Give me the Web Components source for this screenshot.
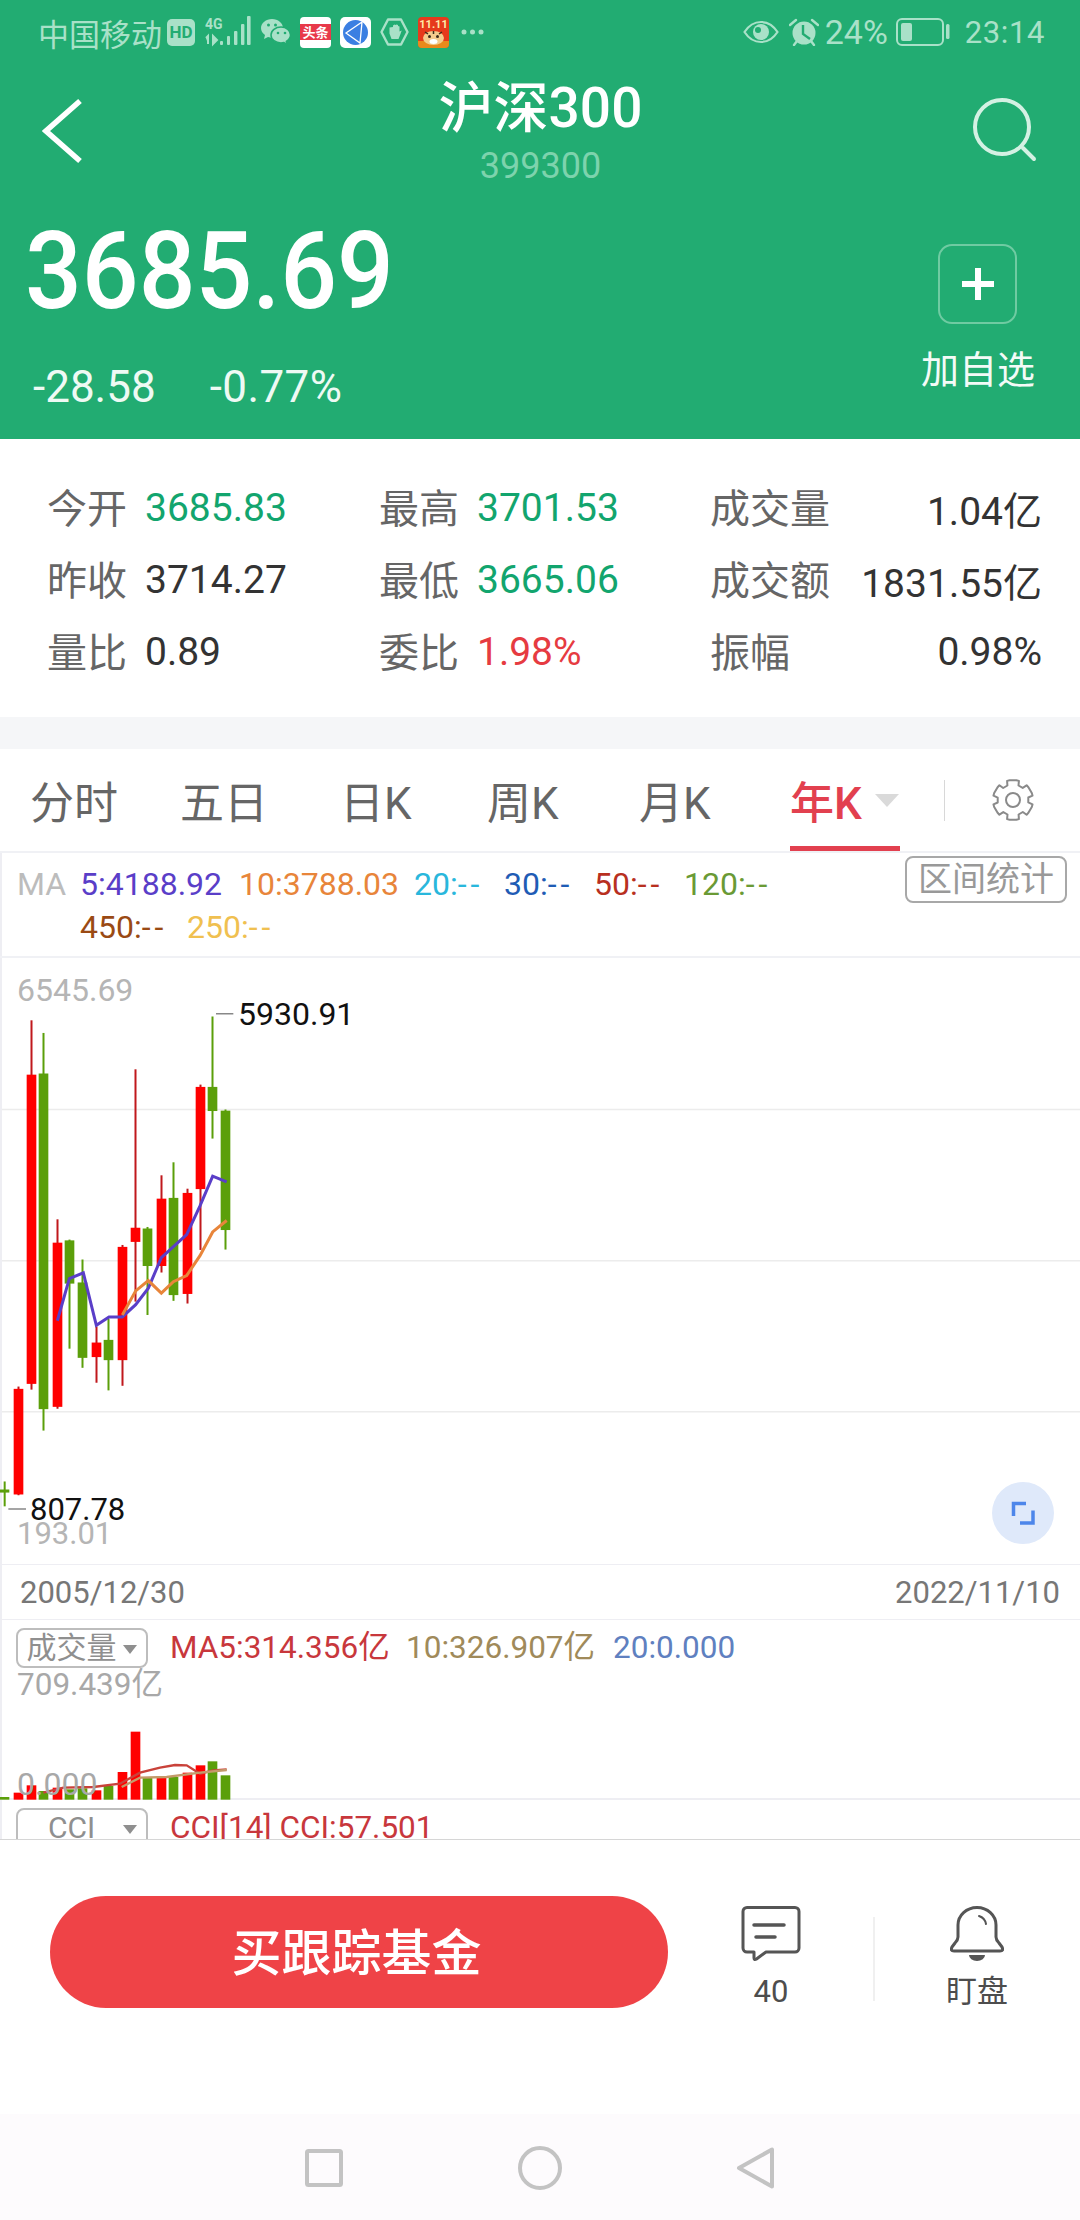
<!DOCTYPE html>
<html lang="zh">
<head>
<meta charset="utf-8">
<title>沪深300</title>
<style>
  html, body { margin: 0; background: #fff; }
  body { width: 1080px; height: 2220px; overflow: hidden; font-family: Roboto, "Noto Sans CJK SC", sans-serif; }
</style>
</head>
<body>
<quote-header></quote-header>
<stat-grid>
  <stat-cell label="今开" class="down">3685.83</stat-cell>
  <stat-cell label="最高" class="down">3701.53</stat-cell>
  <stat-cell label="成交量" class="end">1.04亿</stat-cell>
  <stat-cell label="昨收">3714.27</stat-cell>
  <stat-cell label="最低" class="down">3665.06</stat-cell>
  <stat-cell label="成交额" class="end">1831.55亿</stat-cell>
  <stat-cell label="量比">0.89</stat-cell>
  <stat-cell label="委比" class="up">1.98%</stat-cell>
  <stat-cell label="振幅" class="end">0.98%</stat-cell>
</stat-grid>
<period-tabs></period-tabs>
<ma-legend></ma-legend>
<kline-chart></kline-chart>
<date-row></date-row>
<volume-panel></volume-panel>
<cci-panel></cci-panel>
<action-bar></action-bar>
<nav-bar></nav-bar>

<script>
const ICON = '#a9e1c8';

class StatusBar extends HTMLElement {
  connectedCallback() {
    this.attachShadow({ mode: 'open' });
    this.shadowRoot.innerHTML = `
      <style>
        :host { display: flex; align-items: center; justify-content: space-between; height: 66px; padding: 0 35px 2px 38px; box-sizing: border-box; color: ${ICON}; font-size: 31px; }
        .side { display: flex; align-items: center; }
        svg { display: block; flex: none; }
        .hd { width: 28px; height: 27px; margin-left: 5px; border-radius: 5px; background: ${ICON}; color: #22ac72; font: 700 17px/27px Roboto, sans-serif; text-align: center; }
        .news { width: 31px; height: 31px; margin-left: 9px; border-radius: 4px; background: #fff; display: flex; align-items: center; overflow: hidden; }
        .news span { display: block; width: 100%; height: 16px; background: #e8394a; color: #fff; font: 700 13px/16px "Noto Sans CJK SC", sans-serif; text-align: center; }
        .pct { margin-left: 6px; font-size: 34px; }
        .time { margin-left: 15px; font-size: 31px; letter-spacing: .6px; }
      </style>
      <div class="side">
        <span>中国移动</span>
        <span class="hd">HD</span>
        <svg style="margin-left:10px" width="46" height="32" viewBox="0 0 46 32">
          <text x="0" y="13" font-family="Roboto" font-weight="700" font-size="14" fill="${ICON}">4G</text>
          <path d="M3 28V20l-2 2M8 20v8l4-4z" fill="${ICON}" stroke="${ICON}" stroke-width="2"/>
          <rect x="15" y="25" width="3" height="4" rx="1" fill="${ICON}"/>
          <rect x="22" y="20" width="3" height="9" rx="1" fill="${ICON}"/>
          <rect x="29" y="15" width="3.4" height="14" rx="1" fill="${ICON}"/>
          <rect x="36" y="8" width="3.4" height="21" rx="1" fill="${ICON}"/>
          <rect x="42" y="0" width="3.6" height="29" rx="1" fill="${ICON}"/>
        </svg>
        <svg style="margin-left:10px" width="30" height="28" viewBox="0 0 30 28">
          <path d="M11 1C5 1 0 5 0 10c0 3 1.500 5 4 7l-1 4 4-2c1.500.5 3 .7 4 .7C17 20 22 15 22 10 22 5 17 1 11 1z" fill="${ICON}"/>
          <path d="M20 9c-5.500 0-10 3.500-10 8s4.500 8 10 8c1 0 2-.2 3-.5l3 2-.7-3.200c2.700-1.600 4.200-3.800 4.200-6.300 0-4.500-4-8-9.500-8z" fill="${ICON}" stroke="#22ac72" stroke-width="1.500"/>
          <circle cx="7.500" cy="7" r="1.500" fill="#22ac72"/><circle cx="14.500" cy="7" r="1.500" fill="#22ac72"/>
          <circle cx="17" cy="15" r="1.300" fill="#22ac72"/><circle cx="24" cy="15" r="1.300" fill="#22ac72"/>
        </svg>
        <div class="news"><span>头条</span></div>
        <svg style="margin-left:9px" width="31" height="31" viewBox="0 0 31 31">
          <rect width="31" height="31" rx="5" fill="#fff"/>
          <circle cx="15.500" cy="15.500" r="12.500" fill="#3b7fe2"/>
          <path d="M22 5L6 16l14 10zM22 5l-2 21" fill="none" stroke="#fff" stroke-width="1.300"/>
        </svg>
        <svg style="margin-left:9px" width="29" height="28" viewBox="0 0 29 28">
          <path d="M8 1.500h13L27.500 14 21 26.500H8L1.500 14z" fill="none" stroke="${ICON}" stroke-width="2.400" stroke-linejoin="round"/>
          <path d="M9.500 9.500v6l2 5.500h7l2-5 1.200-3.500-2.200 1V8.500l-1.500-.5V7l-1.500-.5-1 .5-1-.5-1.500 1v1.500z" fill="${ICON}"/>
        </svg>
        <svg style="margin-left:9px" width="31" height="31" viewBox="0 0 31 31">
          <rect width="31" height="31" rx="4" fill="#e63a1c"/>
          <path d="M0 24h31v3a4 4 0 0 1-4 4H4a4 4 0 0 1-4-4z" fill="#e98a1c"/>
          <text x="15.500" y="11" text-anchor="middle" font-family="Roboto" font-weight="700" font-size="11" fill="#ffe9a8">11.11</text>
          <ellipse cx="15.500" cy="21" rx="10.500" ry="7" fill="#f4cc8c"/>
          <circle cx="11.500" cy="19.500" r="1.500" fill="#3a2a1a"/><circle cx="19.500" cy="19.500" r="1.500" fill="#3a2a1a"/>
          <path d="M7 15l3 2M24 15l-3 2M15.500 14v3" stroke="#3a2a1a" stroke-width="1.500"/>
          <ellipse cx="15.500" cy="24.500" rx="4" ry="2.500" fill="#fff"/>
        </svg>
        <svg style="margin-left:12px" width="23" height="6" viewBox="0 0 23 6">
          <circle cx="3" cy="3" r="2.500" fill="${ICON}"/><circle cx="11.500" cy="3" r="2.500" fill="${ICON}"/><circle cx="20" cy="3" r="2.500" fill="${ICON}"/>
        </svg>
      </div>
      <div class="side">
        <svg width="36" height="24" viewBox="0 0 36 24">
          <path d="M1.500 12C6 5 12 2 18 2s12 3 16.500 10C30 19 24 22 18 22S6 19 1.500 12z" fill="none" stroke="${ICON}" stroke-width="2.200"/>
          <circle cx="18" cy="12" r="8" fill="${ICON}"/>
          <circle cx="15" cy="10" r="3" fill="#22ac72"/>
        </svg>
        <svg style="margin-left:10px" width="30" height="28" viewBox="0 0 30 28">
          <circle cx="15" cy="15" r="11.500" fill="${ICON}"/>
          <path d="M14 7v9l7 5" fill="none" stroke="#22ac72" stroke-width="2.400"/>
          <path d="M1 7l6-5M29 7l-6-5M5 27l3-4M25 27l-3-4" stroke="${ICON}" stroke-width="2.400" stroke-linecap="round"/>
        </svg>
        <span class="pct">24%</span>
        <svg style="margin-left:8px" width="54" height="28" viewBox="0 0 54 28">
          <rect x="1" y="1" width="46" height="26" rx="5" fill="none" stroke="${ICON}" stroke-width="2"/>
          <rect x="5" y="5" width="11" height="18" rx="2" fill="${ICON}"/>
          <rect x="50" y="6" width="3.500" height="15" rx="1.500" fill="${ICON}"/>
        </svg>
        <span class="time">23:14</span>
      </div>`;
  }
}
customElements.define('status-bar', StatusBar);

class QuoteHeader extends HTMLElement {
  connectedCallback() {
    this.attachShadow({ mode: 'open' });
    this.shadowRoot.innerHTML = `
      <style>
        :host { display: block; background: #22ac72; color: #fff; height: 439px; }
        .nav { display: grid; grid-template-columns: 1fr auto 1fr; align-items: center; height: 130px; padding: 0 41px 0 42px; }
        .nav svg:last-child { justify-self: end; }
        .title { display: flex; flex-direction: column; align-items: center; }
        .name { font-size: 55px; line-height: 64px; font-weight: 500; }
        .code { margin-top: 6px; font-size: 36px; line-height: 40px; color: #7dd3ad; }
        .quote { display: flex; justify-content: space-between; padding: 16px 45px 0 25px; }
        .price { font-size: 107px; line-height: 120px; font-weight: 500; transform: scaleX(.935); transform-origin: left; }
        .change { display: flex; gap: 54px; margin: 30px 0 0 8px; font-size: 44px; line-height: 50px; color: #eefaf4; }
        .change span:last-child { letter-spacing: .4px; }
        .add { display: flex; flex-direction: column; align-items: center; margin-top: 32px; }
        .plus { width: 79px; height: 80px; box-sizing: border-box; border: 2px solid #6fcba2; border-radius: 14px; display: flex; align-items: center; justify-content: center; }
        .add span { margin-top: 23px; font-size: 38px; line-height: 46px; color: #f3fbf7; white-space: nowrap; }
      </style>
      <status-bar></status-bar>
      <div class="nav">
        <svg width="42" height="66" viewBox="0 0 42 66">
          <path d="M38 3L4 33l34 30" fill="none" stroke="#fff" stroke-width="5.500"/>
        </svg>
        <div class="title">
          <div class="name">沪深300</div>
          <div class="code">399300</div>
        </div>
        <svg width="66" height="66" viewBox="0 0 66 66">
          <circle cx="29" cy="29" r="27" fill="none" stroke="#d4f1e3" stroke-width="4"/>
          <path d="M50 50l11 11" stroke="#d4f1e3" stroke-width="4" stroke-linecap="round"/>
        </svg>
      </div>
      <div class="quote">
        <div>
          <div class="price">3685.69</div>
          <div class="change"><span>-28.58</span><span>-0.77%</span></div>
        </div>
        <div class="add">
          <div class="plus"><svg width="32" height="32" viewBox="0 0 32 32"><path d="M16 0v32M0 16h32" stroke="#fff" stroke-width="6"/></svg></div>
          <span>加自选</span>
        </div>
      </div>`;
  }
}
customElements.define('quote-header', QuoteHeader);

class StatGrid extends HTMLElement {
  connectedCallback() {
    this.attachShadow({ mode: 'open' });
    this.shadowRoot.innerHTML = `
      <style>
        :host { display: grid; grid-template-columns: 332px 331px 1fr; grid-auto-rows: 72px; padding: 33px 38px 29px 47px; background: #fff; border-bottom: 32px solid #f5f6f8; }
      </style>
      <slot></slot>`;
  }
}
customElements.define('stat-grid', StatGrid);

class StatCell extends HTMLElement {
  connectedCallback() {
    this.attachShadow({ mode: 'open' });
    this.shadowRoot.innerHTML = `
      <style>
        :host { display: flex; align-items: center; color: #333; }
        :host(.down) { color: #12a56e; }
        :host(.up) { color: #e63b41; }
        :host(.end) { justify-content: space-between; }
        .label { width: 98px; margin-top: -5px; color: #666; font-size: 40px; white-space: nowrap; }
        .value { font-size: 39px; white-space: nowrap; }
      </style>
      <span class="label">${this.getAttribute('label')}</span>
      <span class="value"><slot></slot></span>`;
  }
}
customElements.define('stat-cell', StatCell);

class PeriodTabs extends HTMLElement {
  connectedCallback() {
    const gear = [];
    for (let i = 0; i < 6; i++) {
      const a = -Math.PI / 2 + i * Math.PI / 3;
      [[-.3, 20], [-.17, 20], [.17, 20], [.3, 20], [.36, 15.500], [.68, 15.500]].forEach(([d, r]) => {
        gear.push((21 + r * Math.cos(a + d)).toFixed(1) + ' ' + (21 + r * Math.sin(a + d)).toFixed(1));
      });
    }
    this.attachShadow({ mode: 'open' });
    this.shadowRoot.innerHTML = `
      <style>
        :host { display: grid; grid-template-columns: 150px 160px 147px 152px 150px 155px 48px 42px; align-items: center; height: 102px; padding-left: 30px; background: #fff; border-bottom: 2px solid #f0f1f5; font-size: 44px; color: #666; }
        .on { position: relative; display: flex; align-items: center; height: 100%; color: #e2404f; font-weight: 500; margin-left: 1px; }
        .on::after { content: ""; position: absolute; left: 0; width: 110px; bottom: 0; height: 5px; background: #e2404f; }
        .on i { margin: 0 0 0 13px; width: 0; height: 0; border: 12px solid transparent; border-top: 13px solid #dadada; border-bottom: 0; }
        .rule { width: 1px; height: 41px; background: #d8d8d8; }
        svg { display: block; }
      </style>
      <span>分时</span><span>五日</span><span>日K</span><span>周K</span><span>月K</span>
      <span class="on">年K<i></i></span>
      <span class="rule"></span>
      <svg width="42" height="42" viewBox="0 0 42 42">
        <path d="M${gear.join('L')}z" fill="none" stroke="#8a8a8a" stroke-width="2" stroke-linejoin="round"/>
        <circle cx="21" cy="21" r="7" fill="none" stroke="#8a8a8a" stroke-width="2"/>
      </svg>`;
  }
}
customElements.define('period-tabs', PeriodTabs);

class MaLegend extends HTMLElement {
  connectedCallback() {
    const items = (list) => list.map(([t, c, w]) => {
      const label = t.replace('--', '<b>--</b>');
      return `<span style="color:${c};width:${w}px">${label}</span>`;
    }).join('');
    this.attachShadow({ mode: 'open' });
    this.shadowRoot.innerHTML = `
      <style>
        :host { display: flex; justify-content: space-between; height: 103px; background: #fff; border-bottom: 2px solid #f0f1f5; box-shadow: inset 2px 0 #eeeef3; font-size: 32px; }
        .lines { padding: 10px 0 0 17px; }
        .row { display: flex; height: 43px; line-height: 43px; white-space: nowrap; }
        b { font-weight: 400; letter-spacing: 4px; }
        .stat { width: 162px; height: 47px; margin: 3px 13px 0 0; box-sizing: border-box; border: 2px solid #a8a8a8; border-radius: 8px; color: #999; font-size: 34px; line-height: 43px; text-align: center; white-space: nowrap; }
      </style>
      <div class="lines">
        <div class="row">${items([['MA', '#bcbcbc', 63], ['5:4188.92', '#5a3ec8', 159], ['10:3788.03', '#e8853a', 175], ['20:--', '#29b7dc', 90], ['30:--', '#1f5cb5', 90], ['50:--', '#b8301f', 90], ['120:--', '#6a9a35', 90]])}</div>
        <div class="row" style="padding-left:63px">${items([['450:--', '#9a4a14', 107], ['250:--', '#f0c050', 90]])}</div>
      </div>
      <div class="stat">区间统计</div>`;
  }
}
customElements.define('ma-legend', MaLegend);

const RED = '#ff0000', GREEN = '#5b9f0a';
const BAR_X = [0, 41, 80, 116, 158, 194, 233, 275, 311, 353, 392, 428, 470, 506, 548, 587, 623, 662];

class KlineChart extends HTMLElement {
  connectedCallback() {
    // x, body top, body bottom, wick top, wick bottom, red?  (units of the crop: 3/px across, 2.613/px down)
    const candles = [
      [0, 1381, 1389, 1360, 1425, 0], [41, 1118, 1394, 1112, 1396, 1], [80, 297, 1105, 155, 1120, 1],
      [116, 294, 1171, 188, 1227, 0], [158, 736, 1165, 675, 1170, 1], [194, 730, 843, 728, 1013, 0],
      [233, 840, 1037, 780, 1063, 0], [275, 997, 1035, 955, 1102, 1], [311, 990, 1043, 935, 1122, 0],
      [353, 747, 1043, 742, 1110, 1], [392, 697, 734, 283, 890, 1], [428, 699, 797, 695, 925, 0],
      [470, 621, 797, 560, 814, 1], [506, 619, 873, 526, 888, 0], [548, 606, 870, 595, 895, 1],
      [587, 329, 596, 323, 755, 1], [623, 329, 392, 145, 464, 0], [662, 391, 703, 388, 754, 0]
    ];
    const body = candles.map(([x, t, b, wt, wb, up]) => {
      const w = x === 0 ? 28 : 29;
      const cx = x === 0 ? 14 : x + 14.500;
      const wick = up ? '#c0181c' : GREEN;
      const c = up ? RED : GREEN;
      return `<rect x="${cx - 3}" y="${wt}" width="6" height="${wb - wt}" fill="${wick}"/><rect x="${x}" y="${t}" width="${w}" height="${b - t}" fill="${c}"/>`;
    }).join('');
    this.attachShadow({ mode: 'open' });
    this.shadowRoot.innerHTML = `
      <style>
        :host { display: block; position: relative; height: 606px; background: #fff; box-shadow: inset 2px 0 #eeeef3; font-size: 32px; line-height: 36px; }
        svg { display: block; }
        path { vector-effect: non-scaling-stroke; }
        span { position: absolute; white-space: nowrap; }
        .g { color: #b5b5b5; }
        .k { color: #111; }
        .reset { position: absolute; right: 26px; bottom: 20px; }
      </style>
      <svg width="1080" height="606" viewBox="0 -7.840 3240 1583.500" preserveAspectRatio="none">
        <path d="M6 388H3240M6 783H3240M6 1178H3240" stroke="#ececec" stroke-width="1.500"/>
        ${body}
        <path d="M172 940L208 830 250 815 289 952 327 930 367 930 407 898 445 855 484 775 560 715 600 640 638 562 680 577" fill="none" stroke="#5a3ec8" stroke-width="3"/>
        <path d="M367 925L407 862 445 835 484 868 520 838 560 822 600 770 638 708 680 678" fill="none" stroke="#e8853a" stroke-width="3"/>
        <path d="M648 138H700M25 1432H78" stroke="#888" stroke-width="1.500"/>
      </svg>
      <span class="g" style="left:17px;top:14px">6545.69</span>
      <span class="k" style="left:238px;top:38px">5930.91</span>
      <span class="k" style="left:30px;top:534px;font-size:31px">807.78</span>
      <span class="g" style="left:17px;top:558px;font-size:31px">193.01</span>
      <svg class="reset" width="62" height="62" viewBox="0 0 62 62">
        <circle cx="31" cy="31" r="31" fill="#dfe9fa"/>
        <path d="M21.500 34V21.500H34M41 28.500V41H28" fill="none" stroke="#4d86ea" stroke-width="3.500"/>
      </svg>`;
  }
}
customElements.define('kline-chart', KlineChart);

class DateRow extends HTMLElement {
  connectedCallback() {
    this.attachShadow({ mode: 'open' });
    this.shadowRoot.innerHTML = `
      <style>
        :host { display: flex; align-items: center; justify-content: space-between; height: 54px; padding: 0 20px; background: #fff; border-top: 1px solid #eeeef3; border-bottom: 1px solid #eeeef3; box-shadow: inset 2px 0 #eeeef3; color: #777; font-size: 31px; }
      </style>
      <span>2005/12/30</span><span>2022/11/10</span>`;
  }
}
customElements.define('date-row', DateRow);

class PanelButton extends HTMLElement {
  connectedCallback() {
    this.attachShadow({ mode: 'open' });
    this.shadowRoot.innerHTML = `
      <style>
        :host { display: flex; align-items: center; flex: none; width: 132px; height: 40px; box-sizing: border-box; border: 2px solid #bdbdbd; border-radius: 8px; color: #8f8f8f; font-size: 30px; line-height: 36px; white-space: nowrap; }
        .t { flex: 1; text-align: center; padding-left: 2px; }
        i { width: 0; height: 0; margin: 3px 9px 0 0; border: 7px solid transparent; border-top: 9px solid #8f8f8f; border-bottom: 0; }
      </style>
      <span class="t"><slot></slot></span><i></i>`;
  }
}
customElements.define('panel-button', PanelButton);

class VolumePanel extends HTMLElement {
  connectedCallback() {
    const tops = [768, 755, 733, 750, 740, 745, 742, 748, 735, 693, 572, 708, 706, 708, 695, 673, 661, 703];
    const reds = [0, 1, 1, 0, 1, 0, 0, 1, 0, 1, 1, 0, 1, 0, 1, 1, 0, 0];
    const bars = tops.map((t, i) => `<rect x="${BAR_X[i]}" y="${t}" width="${i ? 29 : 28}" height="${776 - t}" fill="${reds[i] ? RED : GREEN}"/>`).join('');
    this.attachShadow({ mode: 'open' });
    this.shadowRoot.innerHTML = `
      <style>
        :host { display: block; position: relative; height: 180px; box-sizing: border-box; background: #fff; border-bottom: 2px solid #eeeef3; box-shadow: inset 2px 0 #eeeef3; font-size: 31.500px; line-height: 36px; padding-top: 8px; }
        .head { display: flex; align-items: center; padding-left: 16px; white-space: nowrap; height: 40px; }
        .head b { font-weight: 400; position: relative; }
        .g { margin: -1px 0 -1px 17px; color: #a8a8a8; }
        svg { display: block; }
        .zero { position: absolute; left: 17px; top: 146px; color: #a8a8a8; font-size: 32px; }
      </style>
      <div class="head">
        <panel-button>成交量</panel-button>
        <b style="color:#c8373c;margin-left:22px;width:236px">MA5:314.356亿</b>
        <b style="color:#a08a5a;width:207px">10:326.907亿</b>
        <b style="color:#5f80c0">20:0.000</b>
      </div>
      <div class="g">709.439亿</div>
      <svg width="1080" height="96" viewBox="0 483 3240 288" style="overflow:visible">
        ${bars}
        <path d="M130 755L190 740 280 738 360 728 420 695 480 680 525 672 560 673 600 698 640 688 680 685" fill="none" stroke="#c9423a" stroke-width="7"/>
        <path d="M365 738L420 710 500 708 600 695 680 687" fill="none" stroke="#c49a6a" stroke-width="7"/>
      </svg>
      <div class="zero">0.000</div>`;
  }
}
customElements.define('volume-panel', VolumePanel);

class CciPanel extends HTMLElement {
  connectedCallback() {
    this.attachShadow({ mode: 'open' });
    this.shadowRoot.innerHTML = `
      <style>
        :host { display: flex; height: 40px; box-sizing: border-box; overflow: hidden; padding: 8px 0 0 16px; background: #fff; border-bottom: 1px solid #d6d6d6; box-shadow: inset 2px 0 #eeeef3; font-size: 31.500px; line-height: 36px; white-space: nowrap; color: #c8373c; }
        span { margin: 2px 0 0 22px; }
      </style>
      <panel-button>CCI</panel-button>
      <span>CCI[14] CCI:57.501</span>`;
  }
}
customElements.define('cci-panel', CciPanel);

class ActionBar extends HTMLElement {
  connectedCallback() {
    this.attachShadow({ mode: 'open' });
    this.shadowRoot.innerHTML = `
      <style>
        :host { display: flex; align-items: flex-start; height: 274px; box-sizing: border-box; padding: 56px 0 0 50px; background: #fff; }
        .buy { width: 618px; height: 112px; box-sizing: border-box; padding: 4px 5px 0 0; border-radius: 56px; background: #ef4347; color: #fff; font-size: 50px; font-weight: 500; line-height: 108px; text-align: center; }
        .col { display: flex; flex-direction: column; align-items: center; width: 100px; margin: 10px 0 0 53px; color: #4d4d4d; font-size: 31px; line-height: 40px; }
        .col span { margin-top: 8px; }
        .rule { width: 2px; height: 84px; margin: 21px 0 0 52px; background: #f0f0f0; }
        svg { display: block; }
      </style>
      <div class="buy">买跟踪基金</div>
      <div class="col">
        <svg width="60" height="58" viewBox="0 0 60 58">
          <path d="M6 1.500H54a4 4 0 0 1 4 4V42a4 4 0 0 1-4 4H25L15.500 53q-2.500 1.500-2.500-1V46H6a4 4 0 0 1-4-4V5.500a4 4 0 0 1 4-4z" fill="none" stroke="#555" stroke-width="3" stroke-linejoin="round"/>
          <path d="M13 19H43M15 31H34" stroke="#555" stroke-width="3.500" stroke-linecap="round"/>
        </svg>
        <span>40</span>
      </div>
      <div class="rule"></div>
      <div class="col" style="margin-left:52px">
        <svg width="54" height="58" viewBox="0 0 54 58">
          <path d="M8 19a19 17.500 0 0 1 38 0V31q0 3 3 6l3 4q2 4-2 4H4q-4 0-2-4l3-4q3-3 3-6z" fill="none" stroke="#555" stroke-width="3" stroke-linejoin="round"/>
          <path d="M19 49h16a8 6 0 0 1-16 0z" fill="#555"/>
          <path d="M29 10q6 2 7 8" fill="none" stroke="#555" stroke-width="2" stroke-linecap="round"/>
        </svg>
        <span>盯盘</span>
      </div>`;
  }
}
customElements.define('action-bar', ActionBar);

class NavBar extends HTMLElement {
  connectedCallback() {
    this.attachShadow({ mode: 'open' });
    this.shadowRoot.innerHTML = `
      <style>
        :host { display: grid; grid-template-columns: repeat(3, 216px); justify-items: center; align-items: center; height: 107px; padding: 0 216px; background: #fdfbfd; }
        svg { display: block; fill: none; stroke: #c3c3c3; stroke-width: 4; stroke-linejoin: round; }
      </style>
      <svg width="38" height="38" viewBox="0 0 38 38"><rect x="2" y="2" width="34" height="34" rx="1.500"/></svg>
      <svg width="44" height="44" viewBox="0 0 44 44"><circle cx="22" cy="22" r="20"/></svg>
      <svg width="40" height="44" viewBox="0 0 40 44"><path d="M36 3.500V40.500L3 22z"/></svg>`;
  }
}
customElements.define('nav-bar', NavBar);
</script>
</body>
</html>
